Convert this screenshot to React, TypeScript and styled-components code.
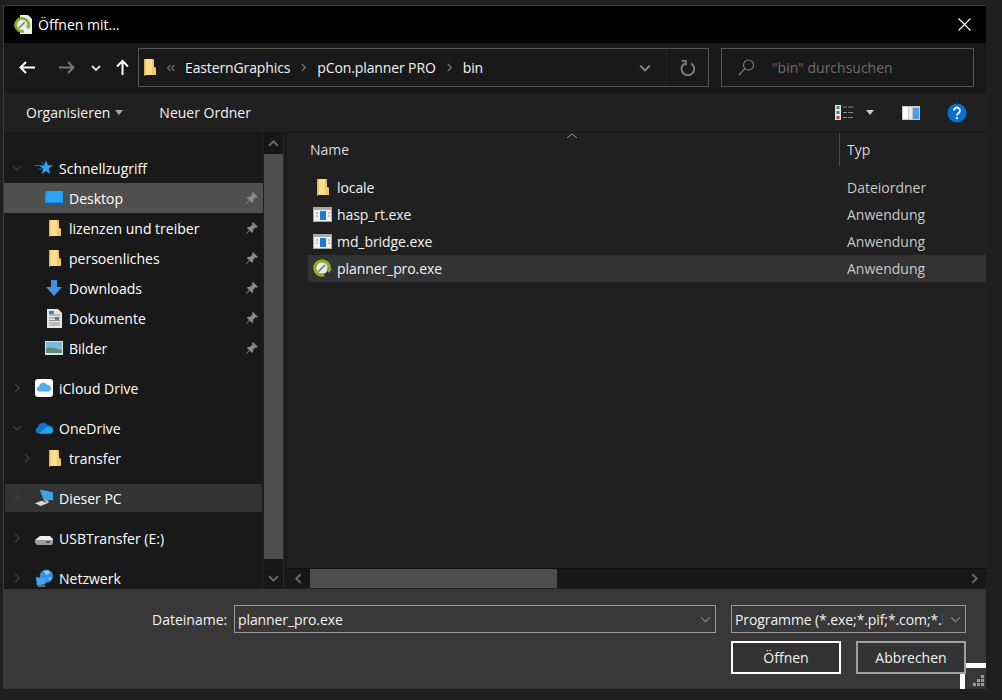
import * as React from 'react'
import styled, { createGlobalStyle } from 'styled-components'

const GlobalStyle = createGlobalStyle`
  html, body {
    margin: 0;
    padding: 0;
    background: #1f1f1f;
    overflow: hidden;
  }
  body {
    font-family: "Open Sans", "Noto Sans", "Liberation Sans", sans-serif;
    font-size: 14px;
    color: #f2f2f2;
  }
`

const Page = styled.div`
  width: 1002px;
  height: 700px;
  padding: 5px 0 0 3px;
  box-sizing: border-box;
`

const Dialog = styled.div`
  position: relative;
  width: 983px;
  height: 684px;
  border: solid #3a3a3a;
  border-width: 1px 0 0 1px;
  box-sizing: border-box;
  display: flex;
  flex-direction: column;
  overflow: hidden;
`

const TitleBar = styled.div`
  height: 37px;
  flex: none;
  background: #000;
  display: flex;
  align-items: center;
  padding: 0 15px 0 10px;
  gap: 6px;
`

const TitleText = styled.span`
  flex: 1;
  color: #fff;
`

const NavBar = styled.div`
  height: 50px;
  flex: none;
  background: #191919;
  display: flex;
  align-items: center;
  padding: 0 12px 1px 0;
  box-sizing: border-box;
`

const NavButton = styled.div<{ $w: number }>`
  width: ${p => p.$w}px;
  height: 39px;
  flex: none;
  display: flex;
  align-items: center;
  justify-content: center;
`

const AddressBox = styled.div`
  width: 571px;
  height: 39px;
  margin-left: 3px;
  flex: none;
  box-sizing: border-box;
  border: 1px solid #555;
  display: flex;
  align-items: center;
  padding-left: 4px;
`

const Crumb = styled.span`
  white-space: nowrap;
  letter-spacing: -0.12px;
`

const CrumbSep = styled.span<{ $w?: number }>`
  width: ${p => p.$w ?? 27}px;
  flex: none;
  display: flex;
  justify-content: center;
`

const AddressEnd = styled.div`
  margin-left: auto;
  display: flex;
  height: 100%;
  align-items: center;
`

const RefreshCell = styled.div`
  width: 41px;
  height: 100%;
  border-left: 1px solid #222;
  display: flex;
  align-items: center;
  justify-content: center;
`

const SearchBox = styled.div`
  width: 253px;
  height: 39px;
  margin-left: 12px;
  flex: none;
  box-sizing: border-box;
  border: 1px solid #555;
  display: flex;
  align-items: center;
  padding-left: 16px;
  gap: 17px;
  color: #6e6e6e;
`

const ToolBar = styled.div`
  height: 40px;
  flex: none;
  box-sizing: border-box;
  background: #202020;
  border-bottom: 1px solid #151515;
  display: flex;
  align-items: center;
  padding: 0 19px 0 22px;
`

const ToolLabel = styled.span<{ $left?: number; $right?: number }>`
  margin-left: ${p => p.$left ?? 0}px;
  margin-right: ${p => p.$right ?? 0}px;
`

const Caret = styled.span<{ $color?: string }>`
  display: inline-block;
  width: 0;
  height: 0;
  border: 4.5px solid transparent;
  border-top: 5px solid ${p => p.$color ?? '#a8a8a8'};
  border-bottom: 0;
`

const ToolRight = styled.div`
  margin-left: auto;
  display: flex;
  align-items: center;
`

const Spacer = styled.span<{ $w: number }>`
  width: ${p => p.$w}px;
  flex: none;
`

const Main = styled.div`
  flex: 1;
  min-height: 0;
  display: flex;
`

const Sidebar = styled.div`
  width: 259px;
  flex: none;
  background: #191919;
  padding-top: 20px;
  overflow: hidden;
  box-sizing: border-box;
`

const TreeRow = styled.div<{ $indent: number; $bg?: string; $after?: boolean; $inset?: boolean }>`
  height: 30px;
  box-sizing: border-box;
  display: flex;
  align-items: center;
  padding-left: ${p => p.$indent}px;
  margin-bottom: ${p => (p.$after ? 10 : 0)}px;
  background: ${p => p.$bg ?? 'transparent'};
  ${p => (p.$inset ? 'box-shadow: inset 0 0 0 1px #191919;' : '')}
`

const Twisty = styled.span`
  width: 31px;
  flex: none;
  display: flex;
  padding-left: 8px;
  box-sizing: border-box;
`

const TreeIcon = styled.span`
  width: 18px;
  flex: none;
  display: flex;
  justify-content: center;
`

const TreeLabel = styled.span`
  flex: 1;
  margin-left: 6px;
  white-space: nowrap;
  color: #fff;
`

const PinCell = styled.span`
  width: 18px;
  flex: none;
  display: flex;
`

const VScroll = styled.div`
  width: 19px;
  flex: none;
  margin-left: 1px;
  background: #171717;
  display: flex;
  flex-direction: column;
  align-items: stretch;
`

const ScrollEnd = styled.div`
  height: 21px;
  flex: none;
  display: flex;
  align-items: center;
  justify-content: center;
`

const VThumb = styled.div`
  height: 405px;
  flex: none;
  background: #4d4d4d;
`

const ScrollFill = styled.div`
  flex: 1;
`

const Splitter = styled.div`
  width: 4px;
  flex: none;
  background: #191919;
  border-left: 1px solid #2a2a2a;
  box-sizing: border-box;
`

const FilePane = styled.div`
  flex: 1;
  min-width: 0;
  background: #202020;
  display: flex;
  flex-direction: column;
`

const HeaderRow = styled.div`
  height: 33px;
  flex: none;
  display: flex;
  position: relative;
  color: #d8d8d8;
`

const NameHeader = styled.div`
  width: 552px;
  flex: none;
  padding: 7px 0 0 23px;
  box-sizing: border-box;
`

const TypeHeader = styled.div`
  flex: 1;
  border-left: 1px solid #4c4c4c;
  padding: 7px 0 0 7px;
`

const SortMark = styled.svg`
  position: absolute;
  left: 280px;
  top: 0;
`

const FileList = styled.div`
  flex: 1;
  padding: 8px 0 0 21px;
`

const FileRow = styled.div<{ $selected?: boolean }>`
  height: 27px;
  display: flex;
  align-items: center;
  background: ${p => (p.$selected ? '#333' : 'transparent')};
`

const FileIcon = styled.span`
  width: 29px;
  flex: none;
  display: flex;
  justify-content: center;
`

const FileName = styled.span`
  width: 510px;
  flex: none;
  letter-spacing: -0.08px;
`

const FileType = styled.span`
  color: #c8c8c8;
`

const HScroll = styled.div`
  height: 20px;
  margin-bottom: 1px;
  flex: none;
  background: #171717;
  border-top: 1px solid #0d0d0d;
  box-sizing: border-box;
  display: flex;
`

const HEnd = styled.div`
  width: 23px;
  flex: none;
  display: flex;
  align-items: center;
  justify-content: center;
`

const HThumb = styled.div`
  width: 247px;
  flex: none;
  background: #4d4d4d;
`

const Footer = styled.div`
  height: 100px;
  flex: none;
  box-sizing: border-box;
  background: #383838;
  padding: 16px 20px 0 148px;
  display: flex;
  flex-direction: column;
  gap: 8px;
`

const FieldRow = styled.div`
  display: flex;
  align-items: center;
  height: 28px;
`

const FieldLabel = styled.label`
  width: 82px;
  flex: none;
`

const Combo = styled.div<{ $w: number }>`
  width: ${p => p.$w}px;
  height: 28px;
  flex: none;
  box-sizing: border-box;
  border: 1px solid #9a9a9a;
  display: flex;
  align-items: center;
  padding: 0 4px 0 3px;
`

const ComboText = styled.span<{ $gap?: number }>`
  flex: 1;
  margin-right: ${p => p.$gap ?? 0}px;
  white-space: nowrap;
  overflow: hidden;
  letter-spacing: -0.1px;
`

const ButtonRow = styled.div`
  display: flex;
  justify-content: flex-end;
  gap: 15px;
`

const DialogButton = styled.button<{ $primary?: boolean }>`
  position: relative;
  z-index: 1;
  width: 110px;
  height: 33px;
  box-sizing: border-box;
  background: #333;
  color: #f2f2f2;
  font: inherit;
  padding: 0;
  border: ${p => (p.$primary ? '2px solid #fff' : '2px solid #a0a0a0')};
`

const CornerMark = styled.div`
  position: absolute;
  right: 0;
  bottom: 0;
  width: 26px;
  height: 26px;
  box-sizing: border-box;
  border-top: 5px solid #fff;
  border-left: 5px solid #fff;
`

const Grip = styled.svg`
  position: absolute;
  right: 2px;
  bottom: 2px;
`

const FolderIcon = () => (
  <svg width="13" height="19" viewBox="0 0 13 19">
    <path d="M1 1h9.500l.5 8 2 1v7H2l-1 1z" fill="#fbdf8e" />
    <path d="M1 1h1.500v15L2 17l-1 1z" fill="#e4b348" />
    <path d="M9 1h1.500l.5 8 2 1v7H9z" fill="#f3c862" />
  </svg>
)

const PinIcon = () => (
  <svg width="14" height="14" viewBox="0 0 14 14">
    <path d="M8 1l5 5-1.200.8-1-.6L8.200 8.600l-.2 2.600-1 .8-2.200-2.600L1.500 13 1 12.500l3.200-3.400L1.800 7l.8-1 2.600-.2 2.400-2.600-.6-1z" fill="#8a8a8a" />
  </svg>
)

const Chevron = ({ dir, color = '#7a7a7a', size = 10, sw = 1.4 }: { dir: 'up' | 'down' | 'left' | 'right'; color?: string; size?: number; sw?: number }) => {
  const paths = {
    up: 'M1 7l4-4 4 4',
    down: 'M1 3l4 4 4-4',
    left: 'M7 1L3 5l4 4',
    right: 'M3 1l4 4-4 4',
  }
  return (
    <svg width={size} height={size} viewBox="0 0 10 10">
      <path d={paths[dir]} fill="none" stroke={color} strokeWidth={sw} />
    </svg>
  )
}

const ArrowIcon = ({ dir, color }: { dir: 'left' | 'right' | 'up'; color: string }) => {
  const d = {
    left: 'M16 8.500H1.500M7 3L1.500 8.500 7 14',
    right: 'M1 8.500h14.500M10 3l5.500 5.500L10 14',
    up: 'M8.500 16V2M3 7.500L8.500 2 14 7.500',
  }
  return (
    <svg width="17" height="17" viewBox="0 0 17 17">
      <path d={d[dir]} fill="none" stroke={color} strokeWidth="2" />
    </svg>
  )
}

const PconMark = () => (
  <>
    <circle cx="9" cy="9" r="6" fill="#ececec" />
    <path d="M11 15.900A7.200 7.200 0 1 1 16.200 9.500" fill="none" stroke="#8db028" strokeWidth="3.200" />
    <path d="M13 9.500h6l-3 4.500z" fill="#8db028" />
    <path d="M5.500 12.500L12 6" stroke="#6e6e6e" strokeWidth="1.400" />
  </>
)

const PconIcon = () => (
  <svg width="19" height="19" viewBox="0 0 19 19">
    <PconMark />
  </svg>
)

const TitleIcon = () => (
  <svg width="18" height="19" viewBox="0 0 18 19">
    <path d="M6 0h8l4 4v15H6z" fill="#efefef" />
    <g transform="scale(.9) translate(0 2)">
      <PconMark />
    </g>
  </svg>
)

const ExeIcon = () => (
  <svg width="19" height="15" viewBox="0 0 19 15">
    <rect x="0" y="0" width="19" height="15" fill="#a8a8a8" />
    <rect x="1" y="3" width="17" height="11" fill="#f2f2f2" />
    <rect x="7" y="4" width="6" height="9" fill="#1a78d6" />
    <path d="M3 6h2M3 9h2M15 6h2M15 9h2" stroke="#8a8a8a" />
  </svg>
)

const StarIcon = () => (
  <svg width="18" height="16" viewBox="0 0 18 16">
    <path d="M11 0l1.900 5.300H18l-4.200 3.300 1.500 5.600-4.300-3.200-4.500 3.200 1.600-5.500L4 5.500h5z" fill="#2f9ff0" />
    <path d="M0 5.500h5M3 9h4M6 1.500l3 3.500" stroke="#1c75bd" strokeWidth="1" />
  </svg>
)

const DesktopIcon = () => (
  <svg width="18" height="14" viewBox="0 0 18 14">
    <rect x="0" y="0" width="18" height="13" fill="#178ae6" />
    <path d="M2 0h15.500v11H0z" fill="#2aa5f7" />
    <rect x="0" y="12" width="18" height="1.400" fill="#0d62b0" />
  </svg>
)

const DownloadIcon = () => (
  <svg width="16" height="16" viewBox="0 0 16 16">
    <path d="M5 0h6v7h5l-8 9-8-9h5z" fill="#3d94e3" />
  </svg>
)

const DocIcon = () => (
  <svg width="15" height="19" viewBox="0 0 15 19">
    <path d="M0 0h11l4 4v15H0z" fill="#e4e4e4" />
    <path d="M2 6h11M2 9h11M2 11.500h11M2 14h11M2 16h11" stroke="#8e8e8e" />
    <rect x="2" y="2" width="5" height="3" fill="#3c82c8" />
    <rect x="8" y="8" width="4" height="3" fill="#3c82c8" />
  </svg>
)

const PictureIcon = () => (
  <svg width="18" height="14" viewBox="0 0 18 14">
    <rect width="18" height="14" fill="#e2e2e2" />
    <rect x="1" y="1" width="16" height="11" fill="#7eb6dc" />
    <path d="M1 8c4-3 8-1 16 1v3H1z" fill="#5b8d74" />
  </svg>
)

const ICloudIcon = () => (
  <svg width="18" height="18" viewBox="0 0 18 18">
    <rect width="18" height="18" rx="3" fill="#fff" />
    <path d="M4.500 12.500a2.500 2.500 0 0 1-.3-5 4.200 4.200 0 0 1 8-1.400 3.300 3.300 0 0 1 1.500 6.400z" fill="#52aef2" />
  </svg>
)

const OneDriveIcon = () => (
  <svg width="20" height="14" viewBox="0 0 20 14">
    <path d="M4 13a3.500 3.500 0 0 1-.8-6.800 6 6 0 0 1 11-2.200 4.600 4.600 0 0 1 2.500 9z" fill="#0f78d4" />
    <path d="M4 13h13a3 3 0 0 0 .4-6l-4.400-1-5 4z" fill="#29a5ee" />
  </svg>
)

const PcIcon = () => (
  <svg width="19" height="18" viewBox="0 0 19 18">
    <path d="M5 0l14 3v8.500L9 11z" fill="#3ea2ea" />
    <path d="M9 11l5 .3.500 3-2 .2z" fill="#bbb" />
    <path d="M0 14.500l7-2.500 6 2.500-7 3z" fill="#dcdcdc" />
  </svg>
)

const DriveIcon = () => (
  <svg width="18" height="16" viewBox="0 0 18 16">
    <path d="M0 10l5-4h10l3 3v1z" fill="#ececec" />
    <path d="M0 10h18v3l-1 2H2l-2-2z" fill="#9c9c9c" />
    <rect x="11" y="11.500" width="4" height="1.500" fill="#444" />
  </svg>
)

const NetworkIcon = () => (
  <svg width="19" height="18" viewBox="0 0 19 18">
    <circle cx="12" cy="7" r="7" fill="#3a8fd8" />
    <path d="M9 2l5-1 2 3-4 2zM14 9l3-1-1 4z" fill="#8ec7ef" />
    <path d="M1 8l10 1.500v6L2 17z" fill="#42a6ea" />
    <path d="M3 17h8v1H3z" fill="#c8c8c8" />
  </svg>
)

const SearchIcon = () => (
  <svg width="17" height="17" viewBox="0 0 17 17">
    <circle cx="10.500" cy="6" r="5" fill="none" stroke="#7c7c7c" strokeWidth="1.100" />
    <path d="M7 9.500L1 16" stroke="#7c7c7c" strokeWidth="1.200" />
  </svg>
)

const RefreshIcon = () => (
  <svg width="15" height="16" viewBox="0 0 15 16">
    <path d="M5 3.300A6.300 6.300 0 1 0 11 3.400" fill="none" stroke="#7d7d7d" strokeWidth="2" />
    <path d="M1.500 .8H6v4.500" fill="none" stroke="#7d7d7d" strokeWidth="1.800" />
  </svg>
)

const ViewIcon = () => (
  <svg width="18" height="15" viewBox="0 0 18 15">
    <rect width="6" height="15" fill="#e6e6e6" />
    <rect x="1.500" y="1" width="3" height="3" fill="#4a8c5c" />
    <rect x="1.500" y="6" width="3" height="3" fill="#4a7ec0" />
    <rect x="1.500" y="11" width="3" height="3" fill="#c83a30" />
    <path d="M8 2h4M13 2h5M8 7.500h4M13 7.500h5M8 12.500h4M13 12.500h5" stroke="#8a8a8a" />
  </svg>
)

const PaneIcon = () => (
  <svg width="18" height="14" viewBox="0 0 18 14">
    <rect width="18" height="14" fill="#c9c9c9" />
    <rect x="1" y="1" width="5" height="12" fill="#fff" />
    <rect x="7" y="1" width="3" height="12" fill="#e8e8e8" />
    <rect x="11" y="2" width="6" height="11" fill="#4b9fe8" />
  </svg>
)

const HelpIcon = () => (
  <svg width="20" height="20" viewBox="0 0 20 20">
    <circle cx="10" cy="10" r="9.500" fill="#0a6fce" />
    <path d="M7 7.500a3 3 0 1 1 4.500 2.600c-1 .6-1.500 1-1.500 2.400" fill="none" stroke="#fff" strokeWidth="1.800" />
    <rect x="9" y="14" width="2" height="2" fill="#fff" />
  </svg>
)

const CloseIcon = () => (
  <svg width="13" height="13" viewBox="0 0 13 13">
    <path d="M.5.5l12 12M12.500.5l-12 12" stroke="#fff" strokeWidth="1.100" />
  </svg>
)

const DoubleLeft = () => (
  <svg width="10" height="8" viewBox="0 0 10 8">
    <path d="M4.500 1L1.500 4l3 3M8.500 1l-3 3 3 3" fill="none" stroke="#777" strokeWidth="1.100" />
  </svg>
)

type TreeItem = {
  label: string
  icon: React.ReactNode
  indent: number
  twisty?: 'down' | 'right'
  pin?: boolean
  bg?: string
  after?: boolean
  inset?: boolean
}

const tree: TreeItem[] = [
  { label: 'Schnellzugriff', icon: <StarIcon />, indent: 0, twisty: 'down' },
  { label: 'Desktop', icon: <DesktopIcon />, indent: 41, pin: true, bg: '#505050' },
  { label: 'lizenzen und treiber', icon: <FolderIcon />, indent: 41, pin: true },
  { label: 'persoenliches', icon: <FolderIcon />, indent: 41, pin: true },
  { label: 'Downloads', icon: <DownloadIcon />, indent: 41, pin: true },
  { label: 'Dokumente', icon: <DocIcon />, indent: 41, pin: true },
  { label: 'Bilder', icon: <PictureIcon />, indent: 41, pin: true, after: true },
  { label: 'iCloud Drive', icon: <ICloudIcon />, indent: 0, twisty: 'right', after: true },
  { label: 'OneDrive', icon: <OneDriveIcon />, indent: 0, twisty: 'down' },
  { label: 'transfer', icon: <FolderIcon />, indent: 10, twisty: 'right', after: true },
  { label: 'Dieser PC', icon: <PcIcon />, indent: 0, twisty: 'right', bg: '#333', after: true, inset: true },
  { label: 'USBTransfer (E:)', icon: <DriveIcon />, indent: 0, twisty: 'right', after: true },
  { label: 'Netzwerk', icon: <NetworkIcon />, indent: 0, twisty: 'right' },
]

const files = [
  { name: 'locale', type: 'Dateiordner', icon: <FolderIcon /> },
  { name: 'hasp_rt.exe', type: 'Anwendung', icon: <ExeIcon /> },
  { name: 'md_bridge.exe', type: 'Anwendung', icon: <ExeIcon /> },
  { name: 'planner_pro.exe', type: 'Anwendung', icon: <PconIcon />, selected: true },
]

const App = () => (
  <Page>
    <GlobalStyle />
    <Dialog>
      <TitleBar>
        <TitleIcon />
        <TitleText>Öffnen mit...</TitleText>
        <CloseIcon />
      </TitleBar>
      <NavBar>
        <NavButton $w={46}><ArrowIcon dir="left" color="#fff" /></NavButton>
        <NavButton $w={33}><ArrowIcon dir="right" color="#777" /></NavButton>
        <NavButton $w={26}><Chevron dir="down" color="#ddd" sw={1.8} /></NavButton>
        <NavButton $w={26}><ArrowIcon dir="up" color="#fff" /></NavButton>
        <AddressBox>
          <FolderIcon />
          <CrumbSep $w={29}><DoubleLeft /></CrumbSep>
          <Crumb>EasternGraphics</Crumb>
          <CrumbSep><Chevron dir="right" size={9} /></CrumbSep>
          <Crumb>pCon.planner PRO</Crumb>
          <CrumbSep><Chevron dir="right" size={9} /></CrumbSep>
          <Crumb>bin</Crumb>
          <AddressEnd>
            <NavButton $w={42}><Chevron dir="down" color="#8a8a8a" sw={1.6} size={12} /></NavButton>
            <RefreshCell><RefreshIcon /></RefreshCell>
          </AddressEnd>
        </AddressBox>
        <SearchBox>
          <SearchIcon />
          <span>"bin" durchsuchen</span>
        </SearchBox>
      </NavBar>
      <ToolBar>
        <ToolLabel $right={5}>Organisieren</ToolLabel>
        <Caret />
        <ToolLabel $left={36}>Neuer Ordner</ToolLabel>
        <ToolRight>
          <ViewIcon />
          <Spacer $w={13} />
          <Caret $color="#ccc" />
          <Spacer $w={28} />
          <PaneIcon />
          <Spacer $w={27} />
          <HelpIcon />
        </ToolRight>
      </ToolBar>
      <Main>
        <Sidebar>
          {tree.map(item => (
            <TreeRow key={item.label} $indent={item.indent} $bg={item.bg} $after={item.after} $inset={item.inset}>
              {item.twisty && (
                <Twisty><Chevron dir={item.twisty} color="#3f3f3f" /></Twisty>
              )}
              <TreeIcon>{item.icon}</TreeIcon>
              <TreeLabel>{item.label}</TreeLabel>
              {item.pin && <PinCell><PinIcon /></PinCell>}
            </TreeRow>
          ))}
        </Sidebar>
        <VScroll>
          <ScrollEnd><Chevron dir="up" color="#6a6a6a" sw={1.8} size={11} /></ScrollEnd>
          <VThumb />
          <ScrollFill />
          <ScrollEnd><Chevron dir="down" color="#6a6a6a" sw={1.8} size={11} /></ScrollEnd>
        </VScroll>
        <Splitter />
        <FilePane>
          <HeaderRow>
            <NameHeader>Name</NameHeader>
            <TypeHeader>Typ</TypeHeader>
            <SortMark width="10" height="6" viewBox="0 0 10 6">
              <path d="M0 5l5-4 5 4" fill="none" stroke="#999" />
            </SortMark>
          </HeaderRow>
          <FileList>
            {files.map(f => (
              <FileRow key={f.name} $selected={f.selected}>
                <FileIcon>{f.icon}</FileIcon>
                <FileName>{f.name}</FileName>
                <FileType>{f.type}</FileType>
              </FileRow>
            ))}
          </FileList>
          <HScroll>
            <HEnd><Chevron dir="left" color="#6a6a6a" sw={1.8} size={11} /></HEnd>
            <HThumb />
            <ScrollFill />
            <HEnd><Chevron dir="right" color="#6a6a6a" sw={1.8} size={11} /></HEnd>
          </HScroll>
        </FilePane>
      </Main>
      <Footer>
        <FieldRow>
          <FieldLabel>Dateiname:</FieldLabel>
          <Combo $w={482}>
            <ComboText>planner_pro.exe</ComboText>
            <Chevron dir="down" color="#8a8a8a" size={11} sw={1} />
          </Combo>
          <Spacer $w={15} />
          <Combo $w={235}>
            <ComboText $gap={7}>Programme (*.exe;*.pif;*.com;*.bat;*.cmd)</ComboText>
            <Chevron dir="down" color="#8a8a8a" size={11} sw={1} />
          </Combo>
        </FieldRow>
        <ButtonRow>
          <DialogButton $primary>Öffnen</DialogButton>
          <DialogButton>Abbrechen</DialogButton>
        </ButtonRow>
      </Footer>
      <CornerMark />
      <Grip width="12" height="12" viewBox="0 0 12 12">
        <path d="M9 0h3v3H9zM5 4h3v3H5zM9 4h3v3H9zM1 8h3v3H1zM5 8h3v3H5zM9 8h3v3H9z" fill="#9a9a9a" />
      </Grip>
    </Dialog>
  </Page>
)

export default App
